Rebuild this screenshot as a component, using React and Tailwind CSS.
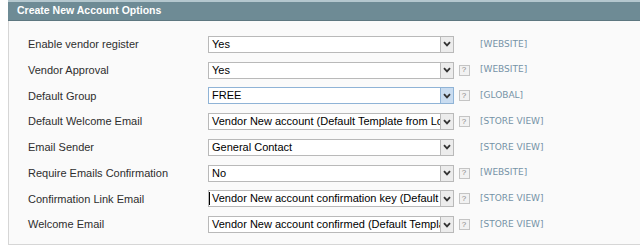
import React from "react";

const rows = [
  { label: "Enable vendor register", value: "Yes", help: false, scope: "[WEBSITE]" },
  { label: "Vendor Approval", value: "Yes", help: true, scope: "[WEBSITE]" },
  { label: "Default Group", value: "FREE", help: true, scope: "[GLOBAL]", focus: true },
  { label: "Default Welcome Email", value: "Vendor New account (Default Template from Locale)", help: true, scope: "[STORE VIEW]" },
  { label: "Email Sender", value: "General Contact", help: false, scope: "[STORE VIEW]" },
  { label: "Require Emails Confirmation", value: "No", help: true, scope: "[WEBSITE]" },
  { label: "Confirmation Link Email", value: "Vendor New account confirmation key (Default Template from Locale)", help: true, scope: "[STORE VIEW]", caret: true },
  { label: "Welcome Email", value: "Vendor New account confirmed (Default Template from Locale)", help: true, scope: "[STORE VIEW]" },
];

function Chevron() {
  return (
    <svg width="8" height="6" viewBox="0 0 8 6">
      <path d="M1 1.2 L4 4.4 L7 1.2" fill="none" stroke="#333" strokeWidth="1.8" />
    </svg>
  );
}

function Select({ value, focus, caret }) {
  return (
    <div
      className={`flex h-[17px] w-[246px] items-stretch border bg-white ${
        focus ? "border-[#8fb3d6]" : "border-[#b9b9b9]"
      }`}
    >
      <div className="relative flex min-w-0 flex-1 items-center overflow-hidden whitespace-nowrap pl-[3px] text-[11px] leading-none text-black">
        {caret && <span className="absolute left-[0px] top-[1px] h-[13px] w-[1px] bg-black" />}
        {value}
      </div>
      <div
        className={`flex w-[13px] shrink-0 items-center justify-center border-l ${
          focus ? "border-[#8fb3d6] bg-[#c9dcf0]" : "border-[#b9b9b9] bg-[#ececec]"
        }`}
      >
        <Chevron />
      </div>
    </div>
  );
}

export default function App() {
  return (
    <div className="h-[250px] w-[640px] bg-white pl-[8px]" style={{ fontFamily: "'Liberation Sans', Arial, sans-serif" }}>
      <div className="h-[2px] bg-[#b4c7ce]" />
      <div className="flex h-[19px] items-center border-b border-[#5d7780] bg-[#6e8b95] pl-[9px] text-[10.5px] font-bold text-white">
        Create New Account Options
      </div>
      <div className="h-[224px] border-b border-l border-[#d6d6d6] bg-[#fafafa] pt-[10.5px]">
        {rows.map((r) => (
          <div key={r.label} className="flex h-[25.75px] items-center">
            <div className="w-[199px] shrink-0 pl-[19px] text-[11px] text-[#2e2e2e]">{r.label}</div>
            <Select value={r.value} focus={r.focus} caret={r.caret} />
            <div className="ml-[4px] flex w-[12px] shrink-0 justify-center">
              {r.help && (
                <div className="flex h-[11px] w-[11px] items-center justify-center border border-[#c4c4c4] bg-[#f2f2f2] text-[8px] leading-none text-[#8a8a8a]">
                  ?
                </div>
              )}
            </div>
            <div className="ml-[10px] text-[9px] text-[#7592a6]" style={{ fontFamily: "'DejaVu Sans', sans-serif" }}>
              {r.scope}
            </div>
          </div>
        ))}
      </div>
    </div>
  );
}
